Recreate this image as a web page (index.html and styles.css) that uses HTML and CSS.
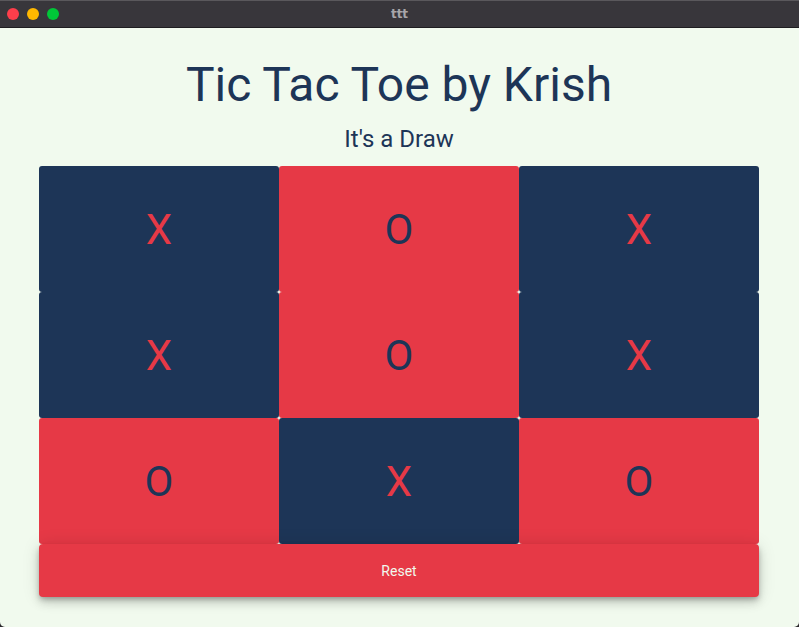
FILE: index.html
```html
<!DOCTYPE html>
<html lang="en">
<head>
<meta charset="utf-8">
<title>ttt</title>
<link rel="stylesheet" href="styles.css">
</head>
<body>
<div class="window">
  <header class="titlebar">
    <div class="lights">
      <span class="light red"></span>
      <span class="light yellow"></span>
      <span class="light green"></span>
    </div>
    <div class="wintitle">ttt</div>
  </header>
  <main class="content">
    <h1 class="title">Tic Tac Toe by Krish</h1>
    <p class="status">It's a Draw</p>
    <div class="board">
      <div class="cell dark">X</div>
      <div class="cell light-cell">O</div>
      <div class="cell dark">X</div>
      <div class="cell dark">X</div>
      <div class="cell light-cell">O</div>
      <div class="cell dark">X</div>
      <div class="cell light-cell">O</div>
      <div class="cell dark">X</div>
      <div class="cell light-cell">O</div>
    </div>
    <button class="reset">Reset</button>
  </main>
</div>
</body>
</html>
```
FILE: styles.css
```css
* { box-sizing: border-box; }
html, body { margin: 0; padding: 0; background: #2a282c; }
body { font-family: Roboto, "Noto Sans", sans-serif; width: 799px; height: 627px; overflow: hidden; }
.window {
  width: 799px; height: 627px;
  display: flex; flex-direction: column;
  border-radius: 0 0 5px 5px;
  overflow: hidden;
  background: #f1faee;
}
.titlebar {
  height: 28px; flex: none;
  background: #38363b;
  border-top: 1px solid #5a585c;
  border-bottom: 1px solid #1e1d20;
  display: flex; align-items: center;
  position: relative;
}
.lights { display: flex; gap: 8px; padding-left: 7px; }
.light { width: 12px; height: 12px; border-radius: 50%; display: block; }
.light.red { background: #fe3e4b; }
.light.yellow { background: #ffb800; }
.light.green { background: #00c738; }
.wintitle {
  position: absolute; left: 0; right: 0; top: 6px;
  text-align: center; color: #a8a6aa;
  font-family: "DejaVu Sans", sans-serif; font-weight: bold; font-size: 12px;
}
.content {
  flex: 1;
  display: flex; flex-direction: column; align-items: center;
  padding: 29px 40px 0 39px;
}
.title {
  margin: 0; font-weight: 400; font-size: 48px; line-height: 56px;
  color: #1d3557;
}
.status {
  margin: 12px 0 0; font-size: 24px; line-height: 28px; color: #1d3557;
}
.board {
  margin-top: 13px;
  width: 720px;
  display: grid;
  grid-template-columns: repeat(3, 240px);
  grid-template-rows: repeat(3, 126px);
}
.cell {
  border-radius: 3px;
  display: flex; align-items: center; justify-content: center;
  font-size: 42px;
}
.cell.dark { background: #1d3557; color: #e63946; }
.cell.light-cell { background: #e63946; color: #1d3557; }
.reset {
  width: 720px; height: 53px; flex: none;
  border: none; border-radius: 4px;
  background: #e63946; color: #f1faee;
  font-family: Roboto, sans-serif; font-size: 14px;
  box-shadow: 0 3px 5px -1px rgba(0,0,0,0.25), 0 6px 10px 0 rgba(0,0,0,0.14), 0 1px 18px 0 rgba(0,0,0,0.12);
  position: relative;
}
```
